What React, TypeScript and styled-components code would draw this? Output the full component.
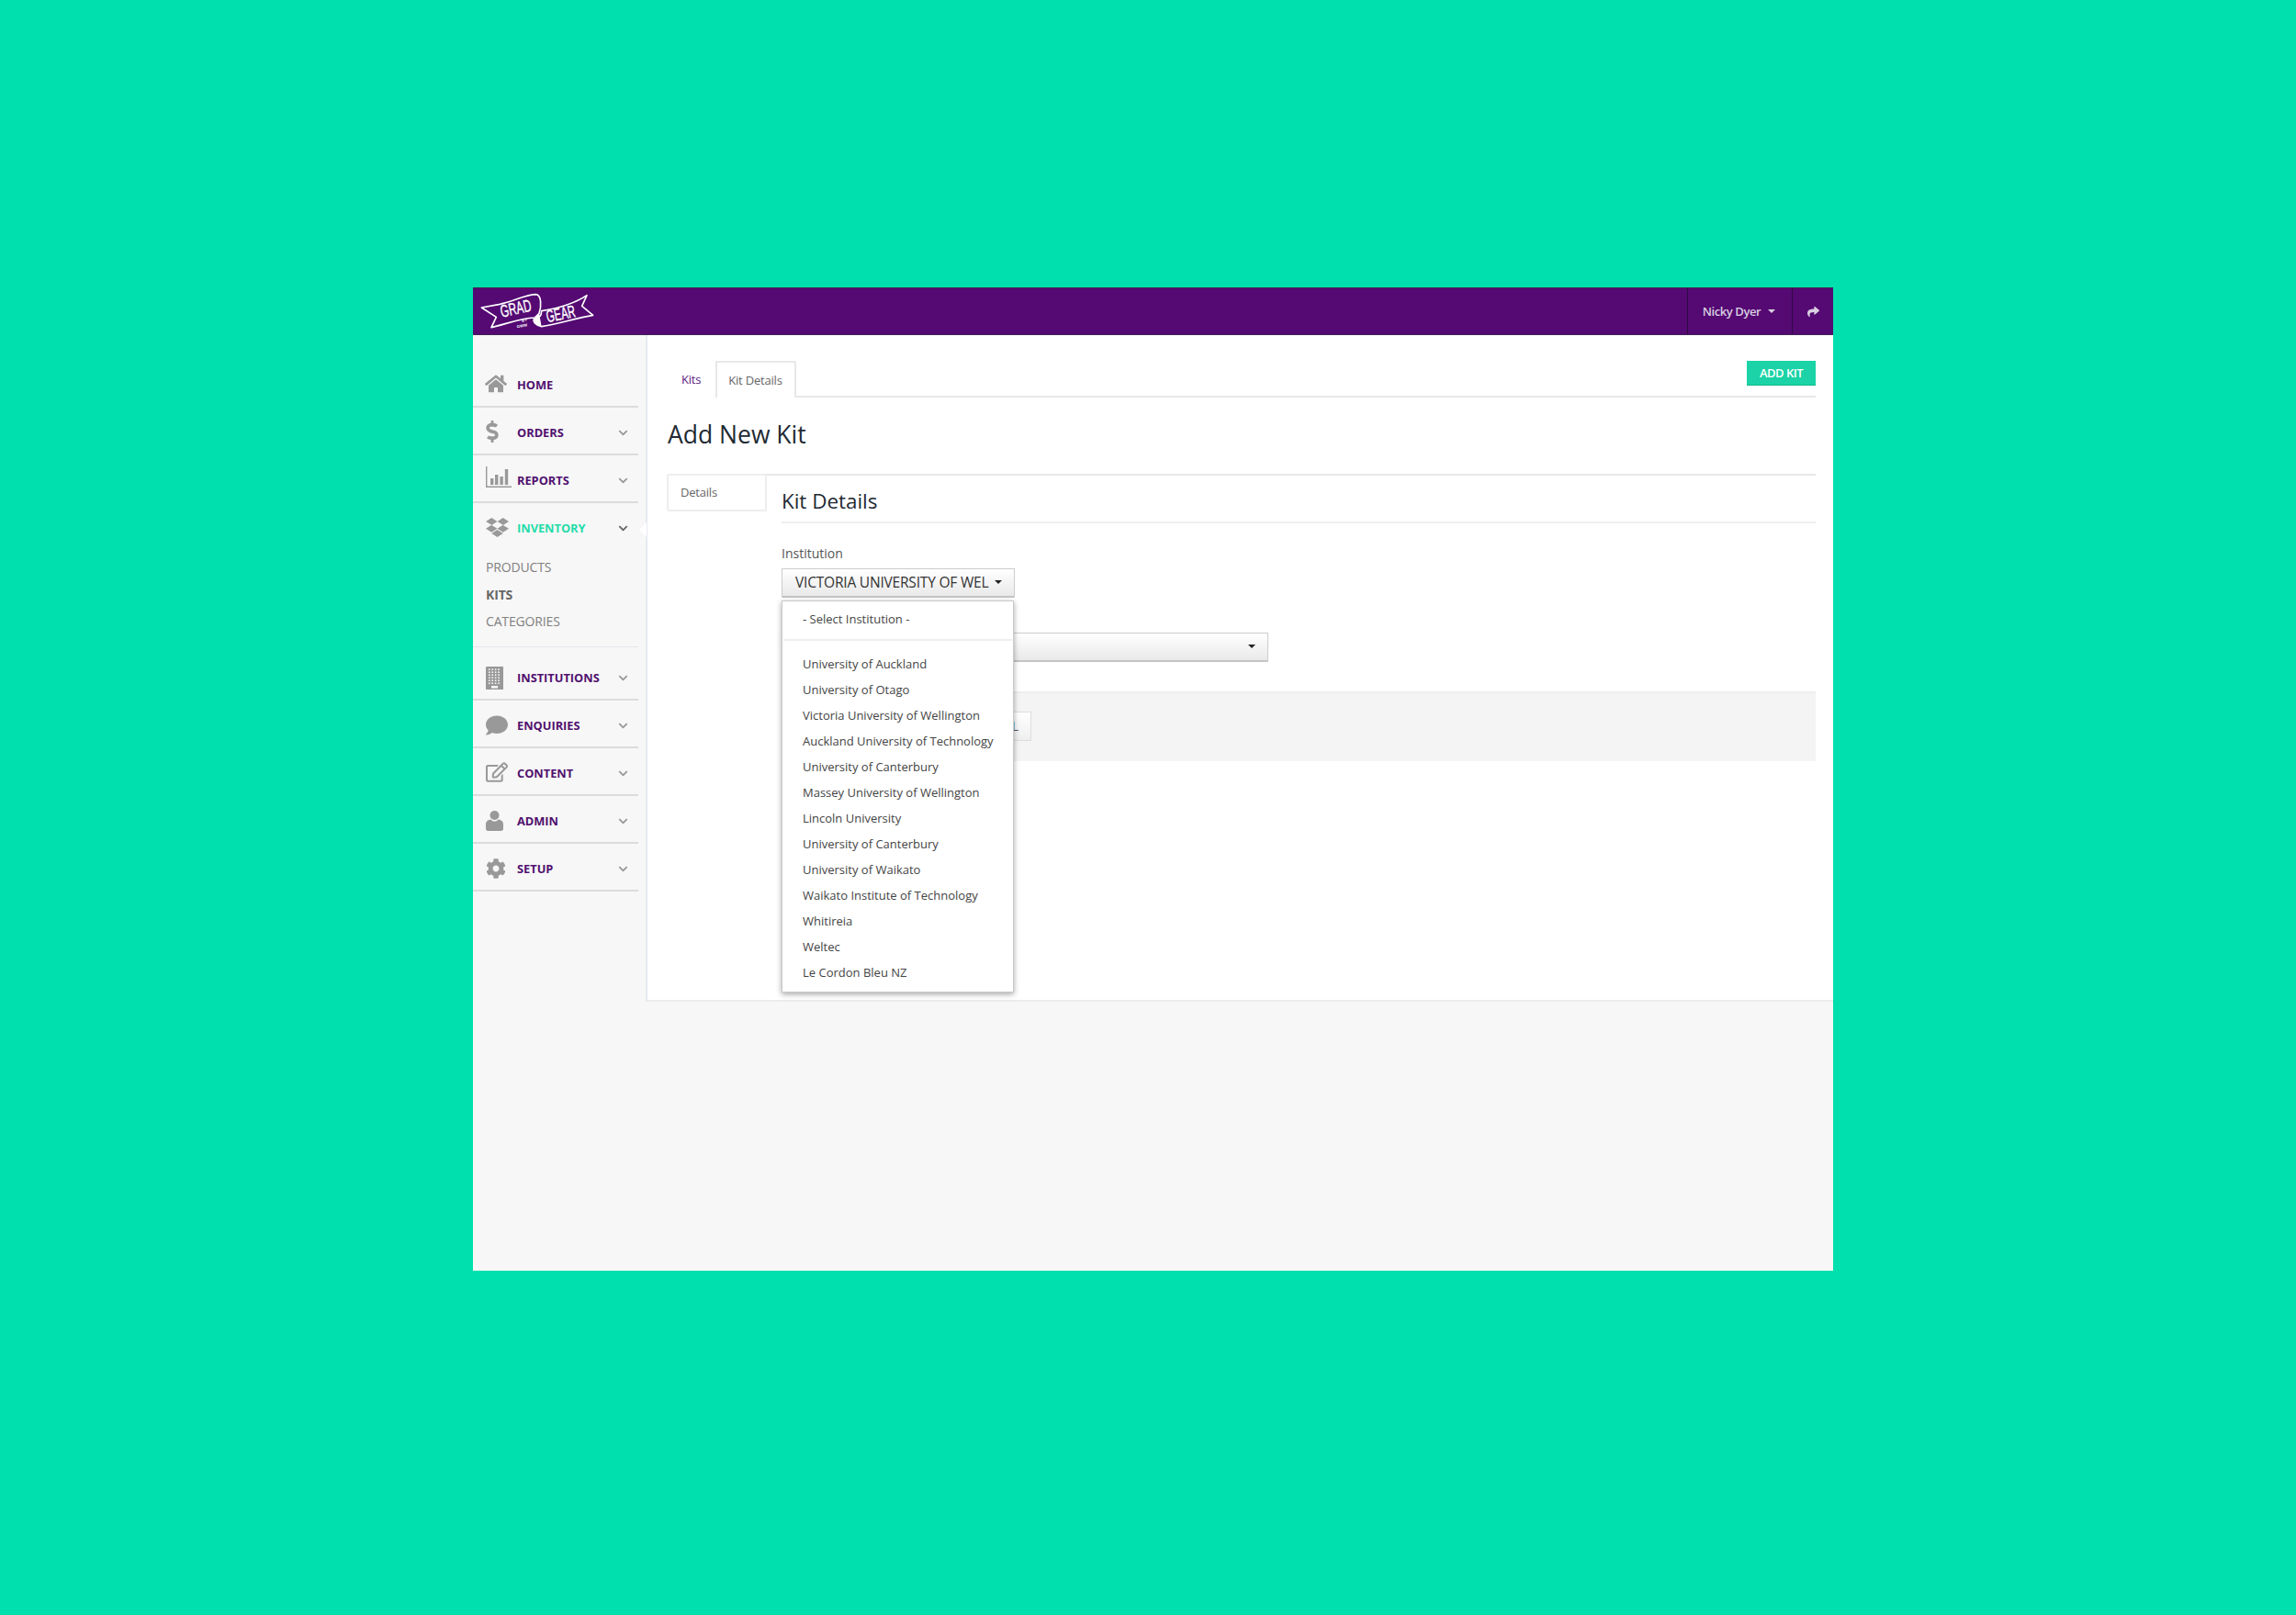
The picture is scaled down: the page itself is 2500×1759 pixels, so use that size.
import React from "react";
import styled, { createGlobalStyle } from "styled-components";
import {
  FaHome,
  FaDollarSign,
  FaDropbox,
  FaComment,
  FaRegEdit,
  FaCog,
  FaShare,
  FaChevronDown,
} from "react-icons/fa";

const GlobalStyle = createGlobalStyle`
  html, body {
    margin: 0;
    padding: 0;
    background: #00e0ae;
  }
  * {
    box-sizing: border-box;
  }
`;

const Page = styled.div`
  width: 2500px;
  height: 1759px;
  padding: 313px 0 0 515px;
  background: #00e0ae;
  font-family: "Open Sans", "Liberation Sans", sans-serif;
  overflow: hidden;
`;

const Shell = styled.div`
  width: 1481px;
  height: 1071px;
  background: #f7f7f7;
  display: flex;
  flex-direction: column;
`;

const Header = styled.header`
  height: 52px;
  background: #540973;
  border-top: 1px solid #3a2a45;
  border-bottom: 1px solid #43205a;
  display: flex;
  align-items: stretch;
  flex-shrink: 0;
`;

const LogoWrap = styled.div`
  display: flex;
  align-items: center;
  padding-left: 8px;
  flex: 1;
`;

const UserMenu = styled.div`
  width: 115px;
  padding-right: 2px;
  border-left: 1px solid #2f0a42;
  border-right: 1px solid #2f0a42;
  display: flex;
  align-items: center;
  justify-content: center;
  gap: 8px;
  color: #d9cfe0;
  font-size: 13px;
  font-weight: 600;
  letter-spacing: -0.4px;
`;

const Caret = styled.span<{ $color?: string }>`
  width: 0;
  height: 0;
  border-left: 4px solid transparent;
  border-right: 4px solid transparent;
  border-top: 4px solid ${({ $color }) => $color || "#222"};
`;

const ShareButton = styled.div`
  width: 44px;
  display: flex;
  align-items: center;
  justify-content: center;
  color: #d9cfe0;
  font-size: 13px;
`;

const Body = styled.div`
  display: flex;
  align-items: flex-start;
`;

const Sidebar = styled.nav`
  width: 190px;
  height: 726px;
  padding: 27px 0 0 0;
  border-right: 2px solid #e6eaf0;
  flex-shrink: 0;
`;

const NavItem = styled.div<{ $open?: boolean; $tall?: boolean }>`
  width: 180px;
  height: ${({ $open, $tall }) => ($open ? "157px" : $tall ? "58px" : "52px")};
  border-bottom: ${({ $open }) => ($open ? "1px solid #e4e7ec" : "2px solid #dcdcdc")};
  position: relative;
`;

const NavRow = styled.div<{ $tall?: boolean }>`
  height: 52px;
  padding: ${({ $tall }) => ($tall ? "14px" : "2px")} 0 0 14px;
  display: flex;
  align-items: center;
`;

const NavIcon = styled.span`
  width: 34px;
  display: flex;
  align-items: center;
  color: #999;
  flex-shrink: 0;
`;

const NavLabel = styled.span<{ $active?: boolean }>`
  flex: 1;
  font-size: 12.8px;
  font-weight: 700;
  color: ${({ $active }) => ($active ? "#1fdca9" : "#50106e")};
`;

const Chevron = styled.span<{ $active?: boolean }>`
  width: 12px;
  margin-right: 10px;
  display: flex;
  font-size: 11px;
  color: ${({ $active }) => ($active ? "#666" : "#999")};
`;

const Notch = styled.span`
  position: absolute;
  right: -9px;
  top: 21px;
  width: 0;
  height: 0;
  border-top: 8px solid transparent;
  border-bottom: 8px solid transparent;
  border-right: 8px solid #fff;
`;

const SubList = styled.div`
  padding: 8px 0 0 14px;
  display: flex;
  flex-direction: column;
  gap: 9.5px;
`;

const SubItem = styled.div<{ $current?: boolean }>`
  font-size: 14px;
  line-height: 20px;
  letter-spacing: -0.15px;
  font-weight: ${({ $current }) => ($current ? 700 : 400)};
  color: ${({ $current }) => ($current ? "#666" : "#808080")};
`;

const Main = styled.main`
  flex: 1;
  height: 726px;
  background: #fff;
  border-bottom: 2px solid #ececec;
  padding: 28px 19px 0 21px;
`;

const TabBar = styled.div`
  height: 40px;
  border-bottom: 2px solid #e8e8e8;
  display: flex;
  align-items: flex-start;
`;

const Tab = styled.div<{ $active?: boolean }>`
  height: 40px;
  padding: 1px 16px 0;
  font-size: 13px;
  line-height: 38px;
  letter-spacing: -0.2px;
  color: ${({ $active }) => ($active ? "#666" : "#5c1b80")};
  background: #fff;
  ${({ $active }) => $active && "border: 2px solid #e8e8e8; border-bottom: none; padding: 0 13px 0 12px;"}
`;

const AddButton = styled.button`
  margin-left: auto;
  width: 75px;
  height: 27px;
  border: none;
  border-bottom: 1px solid #10b98e;
  background: #1bd3a6;
  color: #fff;
  font-family: inherit;
  font-size: 13px;
  font-weight: 600;
  letter-spacing: -0.5px;
  padding: 0;
`;

const Title = styled.h1`
  margin: 20px 0 0 1px;
  font-size: 26.5px;
  line-height: 40px;
  font-weight: 400;
  color: #222a33;
`;

const Panel = styled.div`
  margin-top: 23px;
  display: grid;
  grid-template-columns: 109px 1fr;
`;

const SideTab = styled.div`
  height: 41px;
  border: 2px solid #eee;
  border-radius: 3px 0 0 3px;
  padding-left: 13px;
  font-size: 13px;
  line-height: 36px;
  letter-spacing: -0.2px;
  color: #666;
`;

const PanelBody = styled.div`
  border-top: 2px solid #e8e8e8;
  padding-top: 0;
`;

const SectionTitle = styled.h2`
  margin: 0 0 0 16px;
  height: 52px;
  border-bottom: 2px solid #eee;
  font-size: 22.4px;
  line-height: 55px;
  font-weight: 400;
  color: #222a33;
`;

const Form = styled.div`
  padding: 23px 0 0 16px;
`;

const FieldLabel = styled.label`
  display: block;
  font-size: 14px;
  line-height: 20px;
  color: #555;
`;

const DropdownWrap = styled.div`
  position: relative;
  margin-top: 6px;
  width: 254px;
`;

const SelectButton = styled.div<{ $wide?: boolean }>`
  width: ${({ $wide }) => ($wide ? "530px" : "254px")};
  height: 32px;
  border: 1px solid #ccc;
  border-bottom: 2px solid #c4c4c4;
  background: linear-gradient(#fff, #e9e9e9);
  border-radius: 1px;
  padding: 0 13px 2px 14px;
  display: flex;
  align-items: center;
  justify-content: space-between;
  font-size: 15.5px;
  letter-spacing: -0.2px;
  color: #333;
  white-space: nowrap;
`;

const SecondSelect = styled.div`
  margin-top: 38px;
`;

const Menu = styled.ul`
  position: absolute;
  top: 35px;
  left: 0;
  width: 253px;
  height: 427px;
  margin: 0;
  padding: 5px 0 0;
  list-style: none;
  background: #fff;
  border: 1px solid #c9c9c9;
  box-shadow: 0 2px 6px rgba(0, 0, 0, 0.35);
  z-index: 5;
`;

const MenuItem = styled.li`
  height: 28px;
  padding-left: 22px;
  font-size: 13px;
  line-height: 28px;
  color: #444;
  white-space: nowrap;
`;

const MenuDivider = styled.li`
  height: 2px;
  margin: 8px 1px 11px;
  background: #eee;
`;

const Actions = styled.div`
  height: 76px;
  margin-top: 32px;
  background: #f4f4f4;
  border-top: 2px solid #eee;
  padding: 20px 0 0 150px;
`;

const CancelButton = styled.div`
  width: 122px;
  height: 32px;
  border: 1px solid #ddd;
  background: linear-gradient(#fff, #efefef);
  text-align: right;
  padding-right: 13px;
  font-size: 14px;
  line-height: 30px;
  color: #555;
`;

const Logo = () => (
  <svg width="124" height="40" viewBox="40 45 372 120" fill="none">
    <path
      d="M44 93 L104 82 C150 72 190 50 222 50 C240 52 240 90 232 112 L218 126 C170 128 130 145 76 158 L92 124 Z"
      stroke="#fff"
      strokeWidth="5"
      strokeLinejoin="round"
    />
    <path
      d="M240 104 C290 96 345 82 388 53 L372 88 L408 118 C350 128 290 148 240 155 C222 152 210 140 216 128 C228 128 240 122 240 104 Z"
      stroke="#fff"
      strokeWidth="5"
      strokeLinejoin="round"
    />
    <path d="M214 128 C216 146 228 152 240 155 L232 112 Z" fill="#fff" />
    <text
      fill="#fff"
      stroke="#fff"
      strokeWidth="1.2"
      fontFamily="Liberation Sans"
      fontSize="56"
      transform="translate(110 125) rotate(-12) scale(0.63 1)"
    >
      GRAD
    </text>
    <text
      fill="#fff"
      stroke="#fff"
      strokeWidth="1.2"
      fontFamily="Liberation Sans"
      fontSize="56"
      transform="translate(260 142) rotate(-12) scale(0.6 1)"
    >
      GEAR
    </text>
    <text x="176" y="140" fill="#fff" fontFamily="Liberation Sans" fontWeight="700" fontSize="13" transform="rotate(-10 176 140)">
      BY
    </text>
    <text x="160" y="160" fill="#fff" fontFamily="Liberation Sans" fontWeight="700" fontSize="13" transform="rotate(-10 160 160)">
      GWW
    </text>
  </svg>
);

const ChartIcon = () => (
  <svg width="28" height="24" viewBox="0 0 28 24" fill="#999" style={{ marginTop: -6 }}>
    <path d="M0 0h1.4v21.6H28V23H0z" />
    <rect x="5" y="13" width="3.4" height="7" />
    <rect x="10" y="9" width="3.4" height="11" />
    <rect x="15.4" y="11" width="3.4" height="9" />
    <rect x="20.8" y="3" width="3.4" height="17" />
  </svg>
);

const BuildingIcon = () => {
  const cells = [];
  for (let r = 0; r < 6; r++) {
    for (let c = 0; c < 4; c++) {
      cells.push(<rect key={`${r}-${c}`} x={3 + c * 3.4} y={2.4 + r * 3} width="1.6" height="1.6" fill="#f7f7f7" />);
    }
  }
  return (
    <svg width="19" height="25" viewBox="0 0 19 25">
      <rect width="19" height="25" rx="0.6" fill="#999" />
      {cells}
      <rect x="6" y="21" width="7" height="2.6" fill="#f7f7f7" />
    </svg>
  );
};

const UserIcon = () => (
  <svg width="19" height="22" viewBox="0 0 19 22" fill="#999">
    <circle cx="9.5" cy="5" r="5" />
    <path d="M0 14.5C0 11.5 2.5 10 5.5 9.5c1 1.6 2.4 2.2 4 2.2s3-.6 4-2.2c3 .5 5.5 2 5.5 5v5.3c0 1.2-1 2.2-2.2 2.2H2.2C1 22 0 21 0 19.8z" />
  </svg>
);

interface INavEntry {
  label: string;
  icon: React.ReactNode;
  chevron?: boolean;
  tall?: boolean;
}

const topItems: INavEntry[] = [
  { label: "HOME", icon: <FaHome size={24} style={{ marginLeft: -1, marginTop: -2 }} /> },
  { label: "ORDERS", icon: <FaDollarSign size={24} style={{ marginLeft: -5, marginTop: -2 }} />, chevron: true },
  { label: "REPORTS", icon: <ChartIcon />, chevron: true },
];

const bottomItems: INavEntry[] = [
  { label: "INSTITUTIONS", icon: <BuildingIcon />, chevron: true, tall: true },
  { label: "ENQUIRIES", icon: <FaComment size={24} />, chevron: true },
  { label: "CONTENT", icon: <FaRegEdit size={24} style={{ marginTop: -2 }} />, chevron: true },
  { label: "ADMIN", icon: <UserIcon />, chevron: true },
  { label: "SETUP", icon: <FaCog size={22} />, chevron: true },
];

const institutions = [
  "University of Auckland",
  "University of Otago",
  "Victoria University of Wellington",
  "Auckland University of Technology",
  "University of Canterbury",
  "Massey University of Wellington",
  "Lincoln University",
  "University of Canterbury",
  "University of Waikato",
  "Waikato Institute of Technology",
  "Whitireia",
  "Weltec",
  "Le Cordon Bleu NZ",
];

const renderNav = (item: INavEntry) => (
  <NavItem key={item.label} $tall={item.tall}>
    <NavRow $tall={item.tall}>
      <NavIcon>{item.icon}</NavIcon>
      <NavLabel>{item.label}</NavLabel>
      {item.chevron && (
        <Chevron>
          <FaChevronDown />
        </Chevron>
      )}
    </NavRow>
  </NavItem>
);

const App = function () {
  return (
    <Page>
      <GlobalStyle />
      <Shell>
        <Header>
          <LogoWrap>
            <Logo />
          </LogoWrap>
          <UserMenu>
            Nicky Dyer
            <Caret $color="#d9cfe0" />
          </UserMenu>
          <ShareButton>
            <FaShare />
          </ShareButton>
        </Header>
        <Body>
          <Sidebar>
            {topItems.map(renderNav)}
            <NavItem $open>
              <NavRow>
                <NavIcon>
                  <FaDropbox size={25} style={{ marginTop: -2 }} />
                </NavIcon>
                <NavLabel $active>INVENTORY</NavLabel>
                <Chevron $active>
                  <FaChevronDown />
                </Chevron>
              </NavRow>
              <Notch />
              <SubList>
                <SubItem>PRODUCTS</SubItem>
                <SubItem $current>KITS</SubItem>
                <SubItem>CATEGORIES</SubItem>
              </SubList>
            </NavItem>
            {bottomItems.map(renderNav)}
          </Sidebar>
          <Main>
            <TabBar>
              <Tab>Kits</Tab>
              <Tab $active>Kit Details</Tab>
              <AddButton>ADD KIT</AddButton>
            </TabBar>
            <Title>Add New Kit</Title>
            <Panel>
              <SideTab>Details</SideTab>
              <PanelBody>
                <SectionTitle>Kit Details</SectionTitle>
                <Form>
                  <FieldLabel>Institution</FieldLabel>
                  <DropdownWrap>
                    <SelectButton>
                      VICTORIA UNIVERSITY OF WEL
                      <Caret />
                    </SelectButton>
                    <Menu>
                      <MenuItem>- Select Institution -</MenuItem>
                      <MenuDivider />
                      {institutions.map((name, index) => (
                        <MenuItem key={index}>{name}</MenuItem>
                      ))}
                    </Menu>
                  </DropdownWrap>
                  <SecondSelect>
                    <SelectButton $wide>
                      <span />
                      <Caret />
                    </SelectButton>
                  </SecondSelect>
                  <Actions>
                    <CancelButton>CANCEL</CancelButton>
                  </Actions>
                </Form>
              </PanelBody>
            </Panel>
          </Main>
        </Body>
      </Shell>
    </Page>
  );
};

export default App;
